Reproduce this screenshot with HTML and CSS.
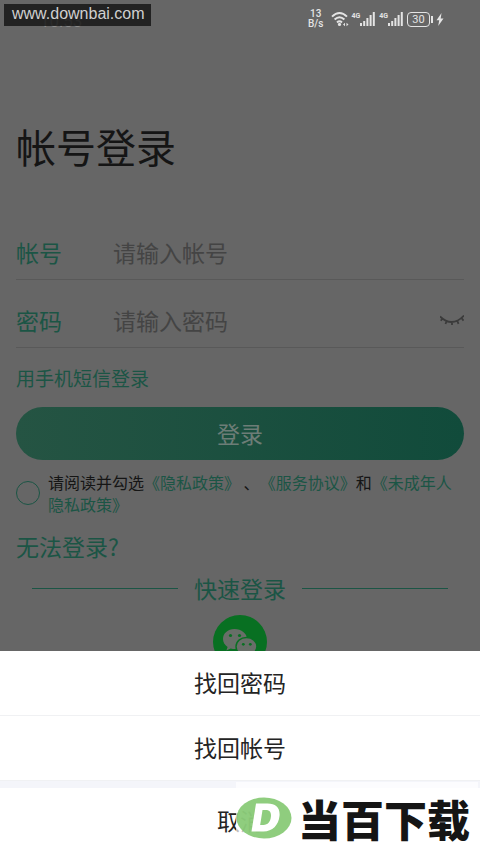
FILE: index.html
```html
<!DOCTYPE html>
<html lang="zh-CN">
<head>
<meta charset="utf-8">
<meta name="viewport" content="width=device-width, initial-scale=1">
<title>帐号登录</title>
<link rel="stylesheet" href="styles.css">
</head>
<body>
<div class="screen">
  <header class="status">
    <time class="clock">10:53</time>
    <div class="indicators">
      <div class="speed"><span>13</span><span>B/s</span></div>
      <svg class="wifi" viewBox="0 0 18 16" width="18" height="16" fill="none" stroke="#e4e4e4" stroke-width="2">
        <path d="M1 5.600Q8.500-1.600 16 5.600M3.600 8.600Q8.500 4 13.400 8.600M6 11.400Q8.500 9.200 11 11.400"/>
        <circle cx="8.500" cy="13.400" r="1.600" fill="#e4e4e4" stroke="none"/>
        <path d="M12 13.500l2-1.800v3.600zM17.500 13.500l-2-1.800v3.600z" fill="#e4e4e4" stroke="none"/>
      </svg>
      <div class="cell"><span>4G</span>
        <svg viewBox="0 0 15 14" width="15" height="14" fill="#e4e4e4"><path d="M0 11h2v3H0zM3.200 9h2v5h-2zM6.400 6h2v8h-2zM9.600 3h2v11h-2zM12.800 0h2v14h-2z"/></svg>
      </div>
      <div class="cell"><span>4G</span>
        <svg viewBox="0 0 15 14" width="15" height="14" fill="#e4e4e4"><path d="M0 11h2v3H0zM3.200 9h2v5h-2zM6.400 6h2v8h-2zM9.600 3h2v11h-2zM12.800 0h2v14h-2z"/></svg>
      </div>
      <div class="battery">30</div>
      <svg class="bolt" viewBox="0 0 8 13" width="8" height="13" fill="#e4e4e4"><path d="M5.500 0L.5 7.300h2.700L2.200 13 7.500 5.500H4.700z"/></svg>
    </div>
  </header>

  <main class="content">
    <h1 class="title">帐号登录</h1>
    <form class="form">
      <div class="field">
        <label for="account">帐号</label>
        <input id="account" type="text" placeholder="请输入帐号">
      </div>
      <div class="field">
        <label for="password">密码</label>
        <input id="password" type="password" placeholder="请输入密码">
        <button class="eye" type="button" aria-label="显示密码">
          <svg viewBox="0 0 24 12" width="24" height="12" fill="none" stroke="#3b3b3b" stroke-width="1.800">
            <path d="M0 2.500Q12 14 24 1.500M2.500 4.500L.8 6.800M6.700 7L5.500 10M12 7.800V11M17.300 6.800l1.200 3M21.500 4l2 2.600"/>
          </svg>
        </button>
      </div>
      <a class="sms" href="#sms">用手机短信登录</a>
      <button class="submit" type="button">登录</button>
      <div class="agree">
        <input id="agree" type="checkbox" aria-label="同意协议">
        <p><label for="agree">请阅读并勾选</label><a href="#privacy">《隐私政策》</a> 、<a href="#terms">《服务协议》</a>和<a href="#minors">《未成年人隐私政策》</a></p>
      </div>
      <a class="help" href="#help">无法登录?</a>
    </form>
    <div class="quick"><span>快速登录</span></div>
    <button class="wechat" type="button" aria-label="微信登录">
      <svg viewBox="0 0 54 54" width="54" height="54">
        <circle cx="27" cy="27" r="27" fill="#087022"/>
        <path d="M21.500 14C14.800 14 10 18.400 10 24c0 3.300 1.700 6 4.600 8l-1.200 3.600 4.300-2.200c1.500.4 2.600.6 4.300.6C28.500 34 34 29.500 34 24s-5.600-10-12.500-10z" fill="#686e68"/>
        <circle cx="17.500" cy="20.500" r="1.600" fill="#087022"/><circle cx="26.500" cy="20.500" r="1.600" fill="#087022"/>
        <path d="M33.500 22.500c-6 0-10.500 4-10.500 9s4.500 9 10.500 9c1.300 0 2.500-.2 3.600-.5l3.500 1.900-1-3.100c2.600-1.800 4.300-4.300 4.300-7.300 0-5-4.600-9-10.400-9z" fill="#686e68" stroke="#087022" stroke-width="1.400"/>
        <circle cx="30.300" cy="29.300" r="1.400" fill="#087022"/><circle cx="37.300" cy="29.300" r="1.400" fill="#087022"/>
      </svg>
    </button>
  </main>

  <div class="sheet">
    <button type="button">找回密码</button>
    <button type="button">找回帐号</button>
    <button class="cancel" type="button">取消</button>
  </div>

  <div class="site">www.downbai.com</div>
  <div class="brand">
    <svg viewBox="0 0 56 42" width="56" height="42">
      <ellipse cx="28" cy="21" rx="27.500" ry="20.500" fill="#7fc66c" fill-opacity="0.880"/>
      <path fill-rule="evenodd" d="M20 6.500h11.500c8.500 0 12.800 4.500 12 12.500-.9 9-7 15.500-16 15.500H15.500zM26.500 13l-2.300 15h3.300c4.300 0 6.900-3.200 7.400-8.200.5-4.600-1.200-6.800-5.400-6.800z" fill="#fff"/>
    </svg>
    <span>当百下载</span>
  </div>
</div>
</body>
</html>
```
FILE: styles.css
```css
* {
  box-sizing: border-box;
}

body {
  margin: 0;
  background: #666;
  color: #151515;
  font-family: "Noto Sans CJK SC", sans-serif;
  text-spacing-trim: space-all;
}

button,
input {
  margin: 0;
  padding: 0;
  border: 0;
  background: none;
  color: inherit;
  font: inherit;
}

a {
  color: #1b5545;
  text-decoration: none;
}

svg {
  display: block;
}

.screen {
  position: relative;
  height: 100vh;
  overflow: hidden;
}

.status {
  display: flex;
  justify-content: space-between;
  align-items: center;
  height: 38px;
  padding: 0 36px 0 40px;
  color: #e4e4e4;
  font-family: Roboto, sans-serif;
}

.clock {
  color: #8c8c8c;
  font-size: 17px;
  line-height: 20px;
  padding-top: 4px;
}

.indicators {
  display: flex;
  align-items: center;
}

.speed {
  display: flex;
  flex-direction: column;
  align-items: center;
  margin-right: 8px;
  font-size: 10px;
  font-weight: 500;
  line-height: 10px;
}

.wifi {
  margin-right: 2px;
}

.cell {
  display: flex;
  align-items: flex-start;
  margin-right: 4px;
}

.cell span {
  font-size: 7px;
  font-weight: 700;
  line-height: 8px;
}

.battery {
  position: relative;
  width: 23px;
  margin-right: 6px;
  border: 1px solid #e4e4e4;
  border-radius: 4px;
  font-size: 11px;
  line-height: 13px;
  text-align: center;
}

.battery::after {
  content: "";
  position: absolute;
  top: 3px;
  right: -4px;
  width: 2px;
  height: 7px;
  background: #e4e4e4;
}

.content {
  padding: 78px 16px 0;
}

.title {
  margin: 0 0 36px;
  font-size: 40px;
  font-weight: 400;
  line-height: 60px;
}

.field {
  display: flex;
  align-items: center;
  height: 68px;
  padding-top: 12px;
  border-bottom: 1px solid #595959;
  font-size: 23px;
}

.field label {
  width: 97px;
  color: #1b5545;
}

.field input {
  flex: 1;
  min-width: 0;
  outline: 0;
}

.field input::placeholder {
  color: #444;
  opacity: 1;
}

.sms {
  display: block;
  padding: 16px 0 15px;
  font-size: 19px;
  line-height: 28px;
}

.submit {
  display: block;
  width: 100%;
  height: 53px;
  padding-bottom: 2px;
  border-radius: 27px;
  background: linear-gradient(90deg, #255443, #114b3b);
  color: #6d7d77;
  font-size: 23px;
}

.agree {
  display: flex;
  align-items: center;
  gap: 8px;
  padding-top: 11px;
  font-size: 16px;
  line-height: 22px;
}

.agree input {
  flex: none;
  width: 24px;
  height: 24px;
  appearance: none;
  border: 1px solid #1b5545;
  border-radius: 50%;
}

.agree p {
  margin: 0;
}

.help {
  display: block;
  padding-top: 15px;
  font-size: 23px;
  line-height: 32px;
}

.quick {
  display: flex;
  align-items: center;
  gap: 16px;
  padding: 10px 16px 11px;
  color: #1b5545;
  font-size: 23px;
  line-height: 32px;
}

.quick::before,
.quick::after {
  content: "";
  flex: 1;
  height: 1px;
  background: #1b5545;
}

.wechat {
  display: block;
  margin: 0 auto;
}

.sheet {
  position: absolute;
  right: 0;
  bottom: 0;
  left: 0;
  display: flex;
  flex-direction: column;
  background: #fff;
  color: #242424;
  font-size: 23px;
}

.sheet button {
  height: 65px;
  padding-bottom: 2px;
  border-bottom: 1px solid #f0f1f3;
}

.sheet .cancel {
  height: 72px;
  border-top: 7px solid #f4f5fa;
  border-bottom: 0;
}

.site {
  position: absolute;
  top: 4px;
  left: 4px;
  padding: 0 6px 2px 8px;
  background: rgba(18, 18, 18, 0.8);
  color: #d0d0d0;
  font-family: "Liberation Sans", sans-serif;
  font-size: 16px;
  line-height: 20px;
}

.brand {
  position: absolute;
  right: 2px;
  bottom: 0;
  display: flex;
  align-items: center;
  gap: 6px;
  width: 242px;
  height: 71px;
  background: rgba(255, 255, 255, 0.7);
  color: #151515;
  font-size: 43px;
  font-weight: 900;
  line-height: 68px;
}
```
